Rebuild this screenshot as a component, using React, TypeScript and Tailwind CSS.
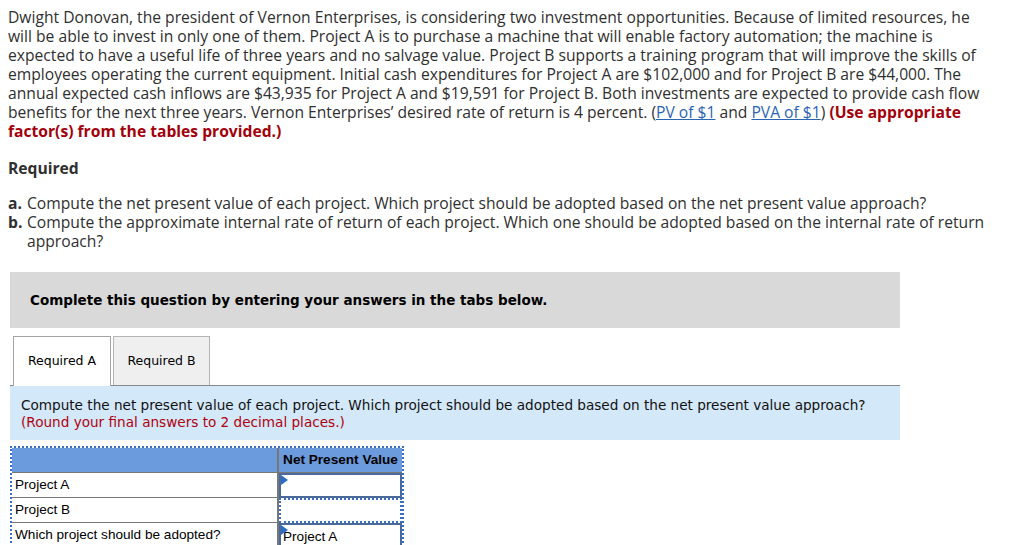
import React from "react";

const TriangleMark = () => (
  <span className="absolute left-0 top-0 h-0 w-0 border-t-[5px] border-b-[5px] border-l-[7px] border-t-transparent border-b-transparent border-l-[#2d6bc4]" />
);

const App = () => {
  return (
    <div className="w-[1024px] h-[545px] overflow-hidden bg-white text-[#2f2f2f]">
      <div className="px-2 pt-[8px] font-['Open_Sans',sans-serif] text-[15.65px] leading-[19px] whitespace-nowrap">
        <p>
          Dwight Donovan, the president of Vernon Enterprises, is considering two investment opportunities. Because of limited resources, he
          <br />
          will be able to invest in only one of them. Project A is to purchase a machine that will enable factory automation; the machine is
          <br />
          expected to have a useful life of three years and no salvage value. Project B supports a training program that will improve the skills of
          <br />
          employees operating the current equipment. Initial cash expenditures for Project A are $102,000 and for Project B are $44,000. The
          <br />
          annual expected cash inflows are $43,935 for Project A and $19,591 for Project B. Both investments are expected to provide cash flow
          <br />
          benefits for the next three years. Vernon Enterprises’ desired rate of return is 4 percent. (
          <a className="text-[#2a64b4] underline">PV of $1</a> and <a className="text-[#2a64b4] underline">PVA of $1</a>){" "}
          <span className="font-bold text-[#a3000b]">(Use appropriate</span>
          <br />
          <span className="font-bold text-[#a3000b]">factor(s) from the tables provided.)</span>
        </p>
        <p className="mt-[18px] font-bold">Required</p>
        <div className="mt-4">
          <div className="flex">
            <span className="w-[19px] shrink-0 font-bold">a.</span>
            <span>Compute the net present value of each project. Which project should be adopted based on the net present value approach?</span>
          </div>
          <div className="flex">
            <span className="w-[19px] shrink-0 font-bold">b.</span>
            <span>
              Compute the approximate internal rate of return of each project. Which one should be adopted based on the internal rate of return
              <br />
              approach?
            </span>
          </div>
        </div>
      </div>

      <div className="mx-[10px] mt-[21px] w-[890px] font-['DejaVu_Sans',Verdana,sans-serif]">
        <div className="flex h-[56px] items-center bg-[#d9d9d9] px-5 text-[13.5px] font-bold text-black">
          Complete this question by entering your answers in the tabs below.
        </div>

        <div className="mt-2 flex items-end border-b border-[#8a8a8a] pl-[3px]">
          <div className="-mb-px flex h-[50px] w-[98px] items-center justify-center border border-b-0 border-[#a5a5a5] bg-white text-[12.5px] text-black">
            Required A
          </div>
          <div className="ml-[2px] flex h-[49px] w-[97px] items-center justify-center border border-b-0 border-[#b5b5b5] bg-[#efefef] text-[12.5px] text-black">
            Required B
          </div>
        </div>

        <div className="bg-[#d3e8f8] px-[11px] pt-[11px] pb-[9px] text-[13.6px] leading-[17px] text-[#111]">
          <p>Compute the net present value of each project. Which project should be adopted based on the net present value approach?</p>
          <p className="text-[#b0000d]">(Round your final answers to 2 decimal places.)</p>
        </div>
      </div>

      <div className="ml-[10px] mt-[6px] w-[394px] border-2 border-dotted border-[#3b6fc0] font-['Liberation_Sans',Arial,sans-serif] text-[13.6px] text-black">
        <table className="w-full border-collapse">
          <tbody>
            <tr className="h-[24px] bg-[#6b9bdc]">
              <td className="w-[266px] border-b border-[#777]"></td>
              <td className="border-l-2 border-b border-[#777] text-center font-bold">Net Present Value</td>
            </tr>
            <tr className="h-[25px]">
              <td className="border-b border-[#777] pl-[3px]">Project A</td>
              <td className="relative border-l-2 border-[#777] p-0">
                <div className="relative h-[25px] border-2 border-[#4b6a9b]">
                  <TriangleMark />
                </div>
              </td>
            </tr>
            <tr className="h-[25px]">
              <td className="border-b border-[#777] pl-[3px]">Project B</td>
              <td className="border-l-2 border-[#777] p-0">
                <div className="h-[25px] border-2 border-dotted border-[#3b6fc0]" />
              </td>
            </tr>
            <tr className="h-[25px]">
              <td className="pl-[3px]">Which project should be adopted?</td>
              <td className="border-l-2 border-[#777] p-0">
                <div className="relative h-[25px] border-2 border-b-0 border-[#4b6a9b] pl-[2px] leading-[23px]">
                  <TriangleMark />
                  Project A
                </div>
              </td>
            </tr>
          </tbody>
        </table>
      </div>
    </div>
  );
};

export default App;
